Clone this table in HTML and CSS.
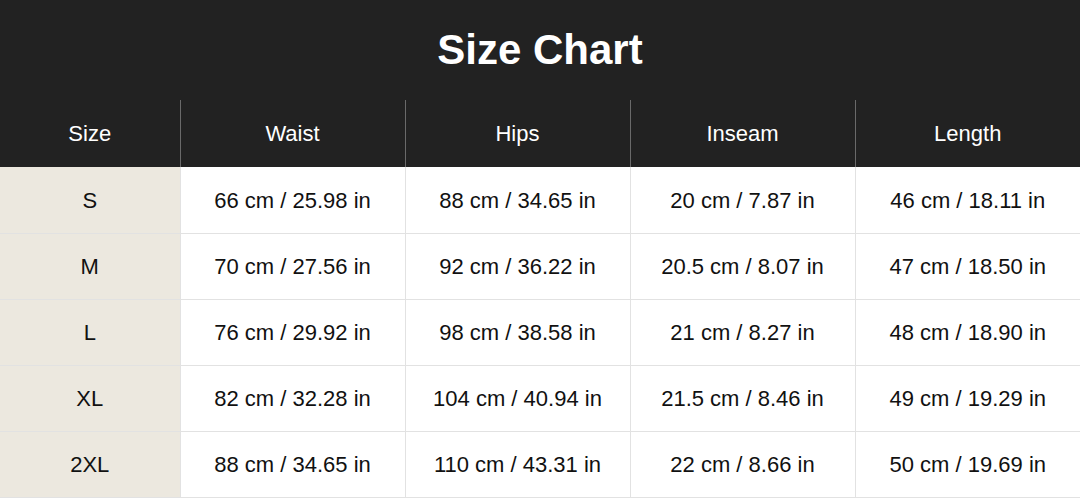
FILE: index.html
```html
<!DOCTYPE html>
<html>
<head>
<meta charset="utf-8">
<link rel="stylesheet" href="styles.css">
</head>
<body>
<div class="chart">
  <div class="title-bar"><h1 class="title">Size Chart</h1></div>
  <table class="table">
    <thead>
      <tr class="head-row">
        <th class="col-size">Size</th>
        <th>Waist</th>
        <th>Hips</th>
        <th>Inseam</th>
        <th>Length</th>
      </tr>
    </thead>
    <tbody>
      <tr><td class="size">S</td><td>66 cm / 25.98 in</td><td>88 cm / 34.65 in</td><td>20 cm / 7.87 in</td><td>46 cm / 18.11 in</td></tr>
      <tr><td class="size">M</td><td>70 cm / 27.56 in</td><td>92 cm / 36.22 in</td><td>20.5 cm / 8.07 in</td><td>47 cm / 18.50 in</td></tr>
      <tr><td class="size">L</td><td>76 cm / 29.92 in</td><td>98 cm / 38.58 in</td><td>21 cm / 8.27 in</td><td>48 cm / 18.90 in</td></tr>
      <tr><td class="size">XL</td><td>82 cm / 32.28 in</td><td>104 cm / 40.94 in</td><td>21.5 cm / 8.46 in</td><td>49 cm / 19.29 in</td></tr>
      <tr><td class="size">2XL</td><td>88 cm / 34.65 in</td><td>110 cm / 43.31 in</td><td>22 cm / 8.66 in</td><td>50 cm / 19.69 in</td></tr>
    </tbody>
  </table>
</div>
</body>
</html>
```
FILE: styles.css
```css
html, body {
  margin: 0;
  padding: 0;
  background: #ffffff;
}
body {
  font-family: "Liberation Sans", Arial, sans-serif;
  color: #111111;
}
.chart {
  width: 1080px;
}
.title-bar {
  background: #222222;
  height: 100px;
  display: flex;
  align-items: center;
  justify-content: center;
}
.title {
  margin: 0;
  color: #ffffff;
  font-size: 42px;
  font-weight: bold;
  line-height: 1;
}
.table {
  width: 1080px;
  border-collapse: collapse;
  table-layout: fixed;
}
.head-row {
  background: #222222;
}
.table th {
  height: 67px;
  padding: 1px 0 0 0;
  color: #ffffff;
  font-weight: normal;
  font-size: 22px;
  text-align: center;
  border-left: 1px solid #6a6a6a;
  box-sizing: border-box;
  width: 225px;
}
.table th.col-size {
  border-left: none;
  width: 180px;
}
.table td {
  height: 66px;
  padding: 2px 0 0 0;
  font-size: 22px;
  text-align: center;
  border-left: 1px solid #e2e2e2;
  border-bottom: 1px solid #e2e2e2;
  box-sizing: border-box;
}
.table td.size {
  border-left: none;
  background: #ece8df;
}
```
